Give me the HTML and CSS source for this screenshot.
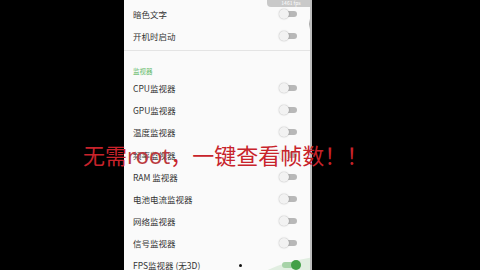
FILE: index.html
```html
<!DOCTYPE html>
<html>
<head>
<meta charset="utf-8">
<link rel="stylesheet" href="styles.css">
</head>
<body>
<div class="stage">
  <div class="screen">
    <div class="toast">1461 fps</div>
    <div class="bubble"></div>
    <div class="row"><span>暗色文字</span><i class="tg"></i></div>
    <div class="row"><span>开机时启动</span><i class="tg"></i></div>
    <div class="divider"></div>
    <div class="head">监视器</div>
    <div class="row"><span>CPU监视器</span><i class="tg"></i></div>
    <div class="row"><span>GPU监视器</span><i class="tg"></i></div>
    <div class="row"><span>温度监视器</span><i class="tg"></i></div>
    <div class="row"><span>频率监视器</span><i class="tg"></i></div>
    <div class="row"><span>RAM 监视器</span><i class="tg"></i></div>
    <div class="row"><span>电池电流监视器</span><i class="tg"></i></div>
    <div class="row"><span>网络监视器</span><i class="tg"></i></div>
    <div class="row"><span>信号监视器</span><i class="tg"></i></div>
    <div class="row"><span>FPS监视器 (无3D)</span><i class="tg on"></i></div>
    <div class="arc"></div>
    <div class="dot"></div>
  </div>
  <div class="caption">无需<span class="lat">root</span>，一键查看帧数！！</div>
</div>
</body>
</html>
```
FILE: styles.css
```css
html, body { margin: 0; padding: 0; }
body {
  width: 480px; height: 270px; overflow: hidden; background: #000;
  font-family: "Noto Sans CJK SC", "Noto Sans", sans-serif;
}
.stage { position: relative; width: 480px; height: 270px; }
.screen {
  position: relative;
  margin-left: 124px; width: 188px; height: 270px;
  background: #fafafa; border-right: 2px solid #bdbdbd;
  padding-top: 2.5px; box-sizing: border-box; overflow: hidden;
}
.row {
  height: 22.2px; display: flex; align-items: center; justify-content: space-between;
  padding: 0 13px 0 9px; font-size: 8.5px; color: #333; position: relative; z-index: 1;
}
.row span { line-height: 10px; }
.tg {
  position: relative; width: 15px; height: 6px; border-radius: 3px; background: #b8b8b8;
}
.tg::after {
  content: ""; position: absolute; left: -3px; top: -2px; width: 10px; height: 10px;
  border-radius: 50%; background: #f2f2f2; box-shadow: 0 0 1.5px rgba(0,0,0,0.35);
}
.tg.on { background: #a7d3a8; }
.tg.on::after { left: 9px; background: #43a047; box-shadow: none; }
.divider { height: 1px; background: #e4e4e4; margin: 3px 0 0; }
.head {
  height: 26px; box-sizing: border-box; display: flex; align-items: flex-end;
  padding: 0 0 1px 9px; font-size: 6.5px; line-height: 9px; color: #66bb6a;
}
.toast {
  position: absolute; left: 143px; top: 0; width: 48px; height: 7px;
  background: #c9c9c9; border-radius: 0 0 4px 4px; color: #fff;
  font-size: 5px; line-height: 6px; text-align: center; overflow: hidden; z-index: 2;
}
.bubble {
  position: absolute; left: 185px; top: 8px; width: 30px; height: 30px;
  border: 1px solid #a8a8a8; border-radius: 50%; background: #f0f0f0;
}
.arc {
  position: absolute; left: 80px; top: 256px; width: 260px; height: 200px;
  border-radius: 50%; background: #e1eee1; z-index: 0;
}
.dot {
  position: absolute; left: 115px; top: 264px; width: 3px; height: 3px;
  border-radius: 50%; background: #111; z-index: 2;
}
.caption {
  position: absolute; left: 83px; top: 140px; font-size: 22px; line-height: 28px;
  color: #c8232b; white-space: nowrap; z-index: 3;
}
.caption .lat { font-family: "Noto Sans", sans-serif; font-weight: 400; color: #bb3a40; }
```
